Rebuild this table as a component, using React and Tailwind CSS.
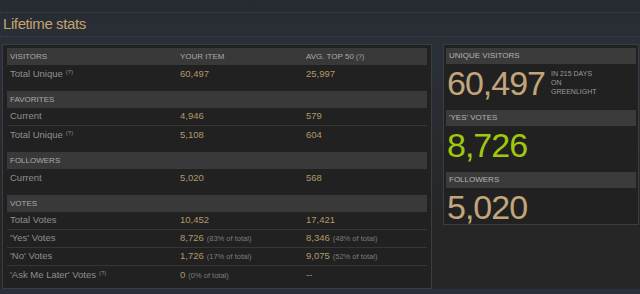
import React from 'react';

const font = "font-['Liberation_Sans',Arial,sans-serif]";

const sections = [
  {
    title: 'Visitors',
    columns: true,
    rows: [{ label: 'Total Unique', help: true, mine: '60,497', avg: '25,997' }],
  },
  {
    title: 'Favorites',
    rows: [
      { label: 'Current', mine: '4,946', avg: '579' },
      { label: 'Total Unique', help: true, mine: '5,108', avg: '604' },
    ],
  },
  {
    title: 'Followers',
    rows: [{ label: 'Current', mine: '5,020', avg: '568' }],
  },
  {
    title: 'Votes',
    rows: [
      { label: 'Total Votes', mine: '10,452', avg: '17,421' },
      { label: "'Yes' Votes", mine: '8,726', mineNote: '(83% of total)', avg: '8,346', avgNote: '(48% of total)' },
      { label: "'No' Votes", mine: '1,726', mineNote: '(17% of total)', avg: '9,075', avgNote: '(52% of total)' },
      { label: "'Ask Me Later' Votes", help: true, mine: '0', mineNote: '(0% of total)', avg: '--' },
    ],
  },
];

function Help() {
  return <span className="relative -top-[3px] ml-[3px] text-[6px] text-[#8a8a8a]">(?)</span>;
}

function Value({ value, note }) {
  return (
    <span className="text-[9.5px] text-[#b39869]">
      {value}
      {note && <span className="ml-[3px] text-[7.5px] text-[#7d7d7d]">{note}</span>}
    </span>
  );
}

function StatsTable() {
  return (
    <div className="w-[430px] h-[245px] shrink-0 border border-[#383d46] bg-[#212121] px-[4px] pt-[3px]">
      {sections.map((s, i) => (
        <div key={s.title} className={i > 0 ? 'mt-[8px]' : ''}>
          <div className="grid h-[17px] grid-cols-[170px_126px_1fr] items-center bg-[#393939] pl-[3px] text-[8px] uppercase text-[#a9a9a9]">
            <span>{s.title}</span>
            {s.columns && <span>Your Item</span>}
            {s.columns && (
              <span>
                Avg. Top 50 <span className="text-[6.5px]">(?)</span>
              </span>
            )}
          </div>
          {s.rows.map((r, j) => (
            <div
              key={r.label}
              className={`grid h-[18px] grid-cols-[170px_126px_1fr] items-center pl-[3px] ${
                j < s.rows.length - 1 ? 'border-b border-[#363636]' : ''
              }`}
            >
              <span className="text-[9.5px] text-[#8f8f8f]">
                {r.label}
                {r.help && <Help />}
              </span>
              <Value value={r.mine} note={r.mineNote} />
              <Value value={r.avg} note={r.avgNote} />
            </div>
          ))}
        </div>
      ))}
    </div>
  );
}

function BigStat({ title, value, color, side, last }) {
  return (
    <div className={last ? '' : 'mb-[10px]'}>
      <div className="flex h-[16px] items-center bg-[#3b3b3b] pl-[3px] text-[8px] uppercase text-[#b3b3b3]">{title}</div>
      <div className="mt-[2px] flex items-start">
        <span className={`pl-[1px] text-[34px] leading-[34px] tracking-[-1px] ${color}`}>{value}</span>
        {side && (
          <div className="ml-[6px] mt-[3px] text-[7px] leading-[9px] uppercase text-[#9a9a9a]">
            {side.map(l => (
              <div key={l}>{l}</div>
            ))}
          </div>
        )}
      </div>
    </div>
  );
}

export default function App() {
  return (
    <div className={`${font} flex h-[294px] w-[640px] flex-col overflow-hidden bg-linear-to-b from-[#262a31] via-[#2b3038] via-15% to-[#262626] to-75%`}>
      <div className="h-[12px] shrink-0" />
      <div className="flex h-[25px] shrink-0 items-center border-y border-dotted border-[#3c424c] pl-[3px]">
        <h1 className="text-[15px] tracking-[-0.4px] text-[#c4a36c]">Lifetime stats</h1>
      </div>
      <div className="mt-[7px] flex h-[245px] shrink-0 items-start gap-[11px] pl-[2px]">
        <StatsTable />
        <div className="w-[196px] shrink-0 border border-[#383d46] bg-[#212121] px-[2px] pt-[3px]">
          <BigStat title="Unique Visitors" value="60,497" color="text-[#c2a57a]" side={['In 215 Days', 'On', 'Greenlight']} />
          <BigStat title="'Yes' Votes" value="8,726" color="text-[#a0c80e]" />
          <BigStat title="Followers" value="5,020" color="text-[#c2a57a]" last />
        </div>
      </div>
      <div className="flex-1 bg-[#2a2e38]" />
    </div>
  );
}
